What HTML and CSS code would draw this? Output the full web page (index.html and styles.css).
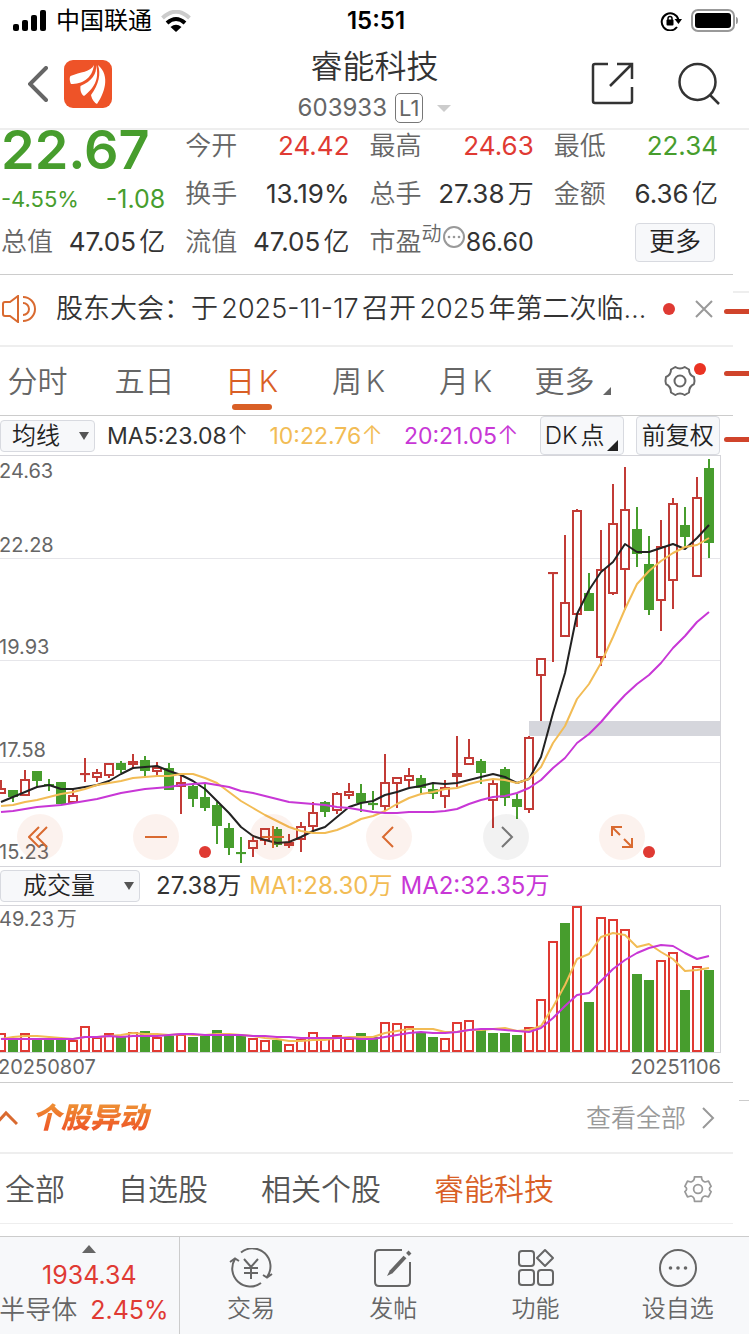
FILE: index.html
```html
<!DOCTYPE html>
<html lang="zh-CN">
<head>
    <meta charset="UTF-8">
    <meta name="viewport" content="width=device-width, initial-scale=1.0">
    <title>睿能科技 603933</title>
    <link rel="stylesheet" href="styles.css">
</head>
<body>
    <div class="status-bar">
        <div class="status-left">
            <svg width="34" height="22" viewBox="0 0 34 22">
                <rect x="0" y="14" width="6" height="7" rx="2"/>
                <rect x="9" y="10" width="6" height="11" rx="2"/>
                <rect x="18" y="5" width="6" height="16" rx="2"/>
                <rect x="27" y="0" width="6" height="21" rx="2"/>
            </svg>
            <span>中国联通</span>
            <svg width="30" height="22" viewBox="0 0 30 22">
                <path d="M1.500 8 Q15 -4.500 28.500 8" fill="none" stroke="#ccc" stroke-width="4"/>
                <path d="M6 13 Q15 5 24 13" fill="none" stroke="#000" stroke-width="4"/>
                <path d="M9.500 17 Q15 12.500 20.500 17 L15 22 Z"/>
            </svg>
        </div>
        <span class="time">15:51</span>
        <div class="status-right">
            <svg width="22" height="20" viewBox="0 0 22 20">
                <path d="M17 16 A8.500 8.500 0 1 1 18.500 9" fill="none" stroke="#000" stroke-width="2"/>
                <path d="M14.500 8 H22 L18.500 13 Z"/>
                <rect x="6.500" y="8.500" width="7" height="6" rx="1"/>
                <path d="M8 9 V7.500 A2 2 0 0 1 12 7.500 V9" fill="none" stroke="#000" stroke-width="1.500"/>
            </svg>
            <svg width="48" height="24" viewBox="0 0 48 24">
                <rect x="1" y="1" width="42" height="21" rx="6" fill="none" stroke="#999" stroke-width="2"/>
                <rect x="4" y="4" width="36" height="15" rx="3"/>
                <path d="M45 8 Q47 8 47 11.500 Q47 15 45 15 Z" fill="#999"/>
            </svg>
        </div>
    </div>

    <header class="header">
        <div class="header-side">
            <button class="icon-btn" aria-label="返回">
                <svg width="20" height="36" viewBox="0 0 20 36" fill="none" stroke="#666" stroke-width="4" stroke-linecap="round"><path d="M18 2 L2 18 L18 34"/></svg>
            </button>
            <a href="#" aria-label="首页">
                <svg width="48" height="48" viewBox="0 0 48 48">
                    <rect width="48" height="48" rx="9" fill="#ee5328"/>
                    <g fill="#fff">
                        <path d="M30 5 C27 12 16 12 6.500 16 C5 18 6 22 7 24 C18 24 28 19 30 5 Z"/>
                        <path d="M32 5 C33 14 28 21 16.500 26 C16 30 17 34 20 36 C29 29 36 20 32 5 Z"/>
                        <path d="M34 5 C37 14 35 24 27 35 C28 40 31 43 33 44 C40 34 47 16 34 5 Z"/>
                    </g>
                </svg>
            </a>
        </div>
        <div class="header-title">
            <h1>睿能科技</h1>
            <div class="code"><span>603933</span><span class="level">L1</span><i class="tri-down pale"></i></div>
        </div>
        <div class="header-side right">
            <button class="icon-btn" aria-label="分享">
                <svg width="44" height="44" viewBox="0 0 44 44" fill="none" stroke="#333" stroke-width="2.500"><path d="M17 2 H4 Q2 2 2 4 V39 Q2 41 4 41 H39 Q41 41 41 39 V25 M26 2 H41 V17 M41 2 L19 24"/></svg>
            </button>
            <button class="icon-btn" aria-label="搜索">
                <svg width="44" height="44" viewBox="0 0 44 44" fill="none" stroke="#333" stroke-width="2.500"><circle cx="20.500" cy="20" r="18"/><path d="M33 33 L42 42"/></svg>
            </button>
        </div>
    </header>

    <main class="main">
        <section class="quote">
            <div class="quote-grid">
                <div class="price green">22.67</div>
                <div class="cell"><span class="label">今开</span><span class="red">24.42</span></div>
                <div class="cell"><span class="label">最高</span><span class="red">24.63</span></div>
                <div class="cell"><span class="label">最低</span><span class="green">22.34</span></div>
                <div class="cell change green"><span class="percent">-4.55%</span><span>-1.08</span></div>
                <div class="cell"><span class="label">换手</span><span>13.19%</span></div>
                <div class="cell"><span class="label">总手</span><span>27.38<b>万</b></span></div>
                <div class="cell"><span class="label">金额</span><span>6.36<b>亿</b></span></div>
                <div class="cell"><span class="label">总值</span><span>47.05<b>亿</b></span></div>
                <div class="cell"><span class="label">流值</span><span>47.05<b>亿</b></span></div>
                <div class="cell">
                    <span class="label">市盈<sup>动</sup></span>
                    <svg class="info" width="22" height="22" viewBox="0 0 22 22" fill="#999"><circle cx="11" cy="11" r="10" fill="none" stroke="#999" stroke-width="2"/><circle cx="6" cy="11" r="1.300"/><circle cx="11" cy="11" r="1.300"/><circle cx="16" cy="11" r="1.300"/></svg>
                    <span class="ratio">86.60</span>
                </div>
                <div class="cell end"><button class="box-btn more-btn">更多</button></div>
            </div>
        </section>

        <section class="notice">
            <svg width="36" height="28" viewBox="0 0 36 28" fill="none" stroke="#d96a30" stroke-width="2"><path d="M5 7 H10 L18 1 V27 L10 21 H5 Q3 21 3 19 V9 Q3 7 5 7 Z M23 8 A6 6 0 0 1 23 20 M23 2 A12 12 0 0 1 23 26"/></svg>
            <a href="#" class="notice-text">股东大会：于2025-11-17召开2025年第二次临…</a>
            <i class="dot"></i>
            <button class="icon-btn" aria-label="关闭">
                <svg width="18" height="18" viewBox="0 0 18 18" fill="none" stroke="#999" stroke-width="2"><path d="M1 1 L17 17 M17 1 L1 17"/></svg>
            </button>
        </section>

        <nav class="tabs">
            <button>分时</button>
            <button>五日</button>
            <button class="active">日K</button>
            <button>周K</button>
            <button>月K</button>
            <button>更多<i class="corner"></i></button>
            <button class="gear-btn" aria-label="设置">
                <svg width="34" height="32" viewBox="0 0 34 32" fill="none" stroke="#666" stroke-width="2"><path d="M12.300 2 Q17 5 21.700 2 L26 4.500 Q26 10 31 12 Q32 16 31 19 Q26 21.500 26 27.500 L21.700 30 Q17 27 12.300 30 L8 27.500 Q8 21.500 3 19 Q2 16 3 12 Q8 10 8 4.500 Z" stroke-linejoin="round"/><circle cx="17" cy="16" r="5.500"/></svg>
                <i class="dot badge"></i>
            </button>
        </nav>

        <section class="indicator">
            <label class="select ma-select"><select aria-label="主图指标"><option>均线</option></select><i class="tri-down"></i></label>
            <span class="ma">MA5:23.08<i class="arrow">↑</i></span>
            <span class="ma yellow">10:22.76<i class="arrow">↑</i></span>
            <span class="ma purple">20:21.05<i class="arrow">↑</i></span>
            <button class="box-btn dk-btn">DK点<i class="corner dark"></i></button>
            <button class="box-btn">前复权</button>
        </section>

        <section class="plot">
            <svg id="kline" viewBox="0 0 720 410"></svg>
            <div class="controls">
                <button class="round" aria-label="最左"><svg width="24" height="24" viewBox="0 0 24 24"><path d="M11 2 L1 12 L11 22 M19 2 L9 12 L19 22"/></svg></button>
                <button class="round" aria-label="缩小"><svg width="24" height="24" viewBox="0 0 24 24"><path d="M1 12 H23"/></svg><i class="dot far"></i></button>
                <button class="round" aria-label="放大"><svg width="24" height="24" viewBox="0 0 24 24"><path d="M1 12 H23 M12 1 V23"/></svg></button>
                <button class="round" aria-label="左移"><svg width="24" height="24" viewBox="0 0 24 24"><path d="M16 2 L6 12 L16 22"/></svg></button>
                <button class="round gray" aria-label="右移"><svg width="24" height="24" viewBox="0 0 24 24"><path d="M8 2 L18 12 L8 22"/></svg></button>
                <button class="round" aria-label="全屏"><svg width="24" height="24" viewBox="0 0 24 24"><path d="M2 11 V2 H12 M2 2 L10 10 M22 13 V22 H12 M22 22 L14 14"/></svg><i class="dot near"></i></button>
            </div>
        </section>

        <section class="indicator volume-head">
            <label class="select vol-select"><select aria-label="副图指标"><option>成交量</option></select><i class="tri-down"></i></label>
            <span>27.38万</span>
            <span class="yellow">MA1:28.30万</span>
            <span class="purple">MA2:32.35万</span>
        </section>

        <section class="plot">
            <svg id="volume" viewBox="0 0 720 146"></svg>
        </section>
        <div class="dates"><span>20250807</span><span>20251106</span></div>

        <section class="moves-head">
            <svg width="18" height="16" viewBox="0 0 18 16" fill="none" stroke="#d96a30" stroke-width="3"><path d="M-4 14 L6 3 L17 14"/></svg>
            <h2>个股异动</h2>
            <a href="#">查看全部<svg width="14" height="24" viewBox="0 0 14 24" fill="none" stroke="#999" stroke-width="2"><path d="M2 2 L12 12 L2 22"/></svg></a>
        </section>

        <nav class="moves-tabs">
            <button>全部</button>
            <button>自选股</button>
            <button>相关个股</button>
            <button class="active">睿能科技</button>
            <button class="end" aria-label="设置">
                <svg width="30" height="28" viewBox="0 0 34 32" fill="none" stroke="#999" stroke-width="2"><path d="M13 2 H21 Q21 7 25 8 L29 7 L32 13 Q28 16 32 19 L29 25 L25 24 Q21 25 21 30 H13 Q13 25 9 24 L5 25 L2 19 Q6 16 2 13 L5 7 L9 8 Q13 7 13 2 Z" stroke-linejoin="round"/><circle cx="17" cy="16" r="5"/></svg>
            </button>
        </nav>

        <div class="marks">
            <i class="edge"></i>
            <i class="stroke first"></i>
            <i class="stroke second"></i>
            <i class="stroke third"></i>
            <i class="edge last"></i>
        </div>
    </main>

    <footer class="bottom-bar">
        <a href="#" class="sector">
            <i class="tri-up"></i>
            <span class="red">1934.34</span>
            <span class="sector-row"><span>半导体</span><span class="red">2.45%</span></span>
        </a>
        <nav class="actions">
            <a href="#">
                <svg width="44" height="40" viewBox="0 0 44 40" fill="none" stroke="#666" stroke-width="2"><path d="M12 4.500 A18 18 0 0 1 38 29 M34 27 L38 29.500 L43 26 M32 35 A18 18 0 0 1 6 11 M1 14 L6 10.500 L10 13 M15 11 L22 19 L29 11 M22 19 V31 M15 20 H29 M15 25 H29"/></svg>
                <span>交易</span>
            </a>
            <a href="#">
                <svg width="40" height="40" viewBox="0 0 40 40" fill="none" stroke="#666" stroke-width="2"><path d="M29 2 H6 Q2 2 2 6 V34 Q2 38 6 38 H33 Q37 38 37 34 V14"/><path d="M32 9 L18 24" stroke-width="4"/><path d="M14 28 L20 25 L17 22 Z" fill="#666" stroke="none"/><path d="M34.500 6.500 L37 4" stroke-width="4"/></svg>
                <span>发帖</span>
            </a>
            <a href="#">
                <svg width="40" height="40" viewBox="0 0 40 40" fill="none" stroke="#666" stroke-width="2"><rect x="3" y="3" width="15" height="15" rx="3"/><rect x="3" y="22" width="15" height="15" rx="3"/><rect x="22" y="22" width="15" height="15" rx="3"/><path d="M29 2 L37 10 L29 18 L21 10 Z" stroke-linejoin="round"/></svg>
                <span>功能</span>
            </a>
            <a href="#">
                <svg width="40" height="40" viewBox="0 0 40 40" fill="#666"><circle cx="20" cy="20" r="18" fill="none" stroke="#666" stroke-width="2"/><circle cx="12.500" cy="20" r="1.800"/><circle cx="20" cy="20" r="1.800"/><circle cx="27.500" cy="20" r="1.800"/></svg>
                <span>设自选</span>
            </a>
        </nav>
    </footer>
    <script src="chart.js"></script>
</body>
</html>
```

FILE: styles.css
```css
* {
    box-sizing: border-box;
}
body {
    margin: 0;
    min-height: 100vh;
    display: flex;
    flex-direction: column;
    background: #fff;
    color: #333;
    font-family: Inter, "Noto Sans CJK SC", sans-serif;
    font-size: 24px;
    font-weight: 400;
    line-height: 32px;
    overflow-x: hidden;
}
:lang(zh-CN) {
    text-autospace: normal;
}
svg {
    display: block;
    flex: none;
}
button, select {
    font: inherit;
    color: inherit;
    background: none;
    border: 0;
    padding: 0;
    margin: 0;
    white-space: nowrap;
}
a {
    color: inherit;
    text-decoration: none;
}
i {
    font-style: normal;
}
b {
    font-weight: 350;
}
h1, h2 {
    margin: 0;
}
.red { color: #e03a33; }
.green { color: #479d2d; }
.yellow { color: #f2bc55; }
.purple { color: #c837d6; }

.dot {
    width: 12px;
    height: 12px;
    border-radius: 50%;
    background: #df3a33;
    flex: none;
}
.tri-down {
    border: 5px solid transparent;
    border-top: 8px solid #555;
    border-bottom: 0;
}
.tri-down.pale {
    border-width: 7px 7px 0;
    border-top-color: #ccc;
}
.tri-up {
    border: 7px solid transparent;
    border-bottom: 8px solid #666;
    border-top: 0;
}
.corner {
    display: inline-block;
    border-left: 8px solid transparent;
    border-bottom: 8px solid #666;
}

/* status bar */
.status-bar {
    display: grid;
    grid-template-columns: 1fr auto 1fr;
    align-items: center;
    height: 42px;
    padding: 0 10px 1px 13px;
    color: #000;
}
.status-left, .status-right {
    display: flex;
    align-items: center;
    gap: 9px;
}
.status-right {
    justify-content: flex-end;
}
.time {
    font-size: 24px;
    font-weight: 600;
}

/* header */
.header {
    display: grid;
    grid-template-columns: 1fr auto 1fr;
    align-items: center;
    height: 88px;
    padding: 0 28px;
    border-bottom: 2px solid #eee;
}
.header-side {
    display: flex;
    align-items: center;
    gap: 16px;
    margin-bottom: 2px;
}
.header-side.right {
    justify-content: flex-end;
    gap: 42px;
}
.header-title {
    padding-top: 2px;
    text-align: center;
}
.header-title h1 {
    font-size: 32px;
    font-weight: 350;
    line-height: 44px;
}
.code {
    display: flex;
    align-items: center;
    justify-content: center;
    gap: 8px;
    height: 38px;
    color: #666;
}
.level {
    font-size: 22px;
    line-height: 28px;
    padding: 0 3px;
    border: 1px solid #777;
    border-radius: 5px;
}
.code .tri-down {
    margin-left: 6px;
}

/* quote */
.main {
    position: relative;
    flex: 1;
    padding-right: 16px;
}
.quote {
    overflow: hidden;
    height: 145px;
    border-bottom: 1px solid #ccc;
}
.quote-grid {
    display: grid;
    grid-template-columns: repeat(4, 1fr);
    grid-auto-rows: 48px;
    column-gap: 20px;
    margin-top: -8px;
    padding: 0 15px 0 1px;
    font-size: 26px;
}
.cell {
    display: flex;
    align-items: center;
    justify-content: space-between;
    white-space: nowrap;
}
.cell.end {
    justify-content: flex-end;
}
.cell.change {
    padding-top: 10px;
    font-size: 25px;
}
.label {
    font-weight: 350;
    color: #666;
}
.label sup {
    font-size: 20px;
    line-height: 0;
}
.info {
    margin-bottom: 10px;
}
.ratio {
    font-size: 25px;
}
.price {
    font-size: 54px;
    font-weight: 600;
    line-height: 56px;
}
.percent {
    font-size: 22px;
}
.box-btn {
    flex: none;
    height: 39px;
    padding: 0 5px;
    border: 1px solid #d8dae0;
    border-radius: 4px;
    background: #f7f8fa;
    color: #222;
    font-weight: 350;
}
.more-btn {
    padding: 0 13px;
    margin-right: 3px;
}

/* notice */
.notice {
    display: flex;
    align-items: center;
    height: 72px;
    padding: 0 20px 2px 0;
    border-bottom: 2px solid #eee;
}
.notice-text {
    flex: 1;
    margin-left: 20px;
    font-size: 27px;
    font-weight: 350;
    white-space: nowrap;
}
.notice .icon-btn {
    margin-left: 20px;
}

/* period tabs */
.tabs {
    display: flex;
    height: 69px;
    margin-left: -16px;
    border-bottom: 1px solid #ccc;
    color: #666;
    font-size: 30px;
    font-weight: 350;
}
.tabs button {
    position: relative;
    flex: 1 1 0;
    display: flex;
    align-items: center;
    justify-content: center;
}
.tabs .active {
    color: #d95f26;
}
.tabs .active::after {
    content: "";
    position: absolute;
    bottom: 5px;
    width: 40px;
    height: 6px;
    border-radius: 3px;
    background: #d95f26;
}
.tabs .corner {
    margin: 20px 0 0 8px;
}
.tabs .badge {
    position: absolute;
    top: 16px;
    left: calc(50% + 14px);
    background: #ea3323;
}

/* indicator rows */
.indicator {
    display: flex;
    align-items: center;
    height: 40px;
    margin-right: 12px;
    padding-right: 4px;
    border-bottom: 1px solid #d5d5da;
    white-space: nowrap;
}
.select {
    display: flex;
    flex: none;
    align-items: center;
    height: 32px;
    border: 1px solid #d8dae0;
    border-radius: 4px;
    background: #f7f8fa;
    color: #222;
    font-weight: 350;
}
.select select {
    appearance: none;
    flex: 1;
}
.ma-select {
    width: 95px;
    margin-right: 12px;
    padding: 0 5px 0 11px;
}
.vol-select {
    width: 140px;
    padding: 0 5px 0 22px;
}
.ma {
    margin-right: 21px;
    font-size: 23px;
}
.arrow {
    font-size: 26px;
    font-weight: 300;
    line-height: 0;
}
.dk-btn {
    position: relative;
    width: 84px;
    margin: 0 12px 0 auto;
    padding: 0 18px 0 4px;
}
.corner.dark {
    position: absolute;
    right: 5px;
    bottom: 3px;
    border-left-width: 11px;
    border-bottom: 11px solid #222;
}
.volume-head {
    gap: 8px;
    height: 39px;
}
.volume-head span {
    text-autospace: no-autospace;
}
.volume-head .select {
    margin-right: 8px;
}

/* charts */
.plot {
    position: relative;
    margin-right: 12px;
    border-right: 1px solid #d5d5da;
    border-bottom: 1px solid #d5d5da;
}
.plot > svg {
    width: 100%;
    height: auto;
}
.plot text {
    font-size: 20px;
    fill: #666;
}
.grid-line { stroke: #e6e6ea; }
.gap-band { fill: #d5d6dc; }
.up { fill: #fff; stroke: #c23b36; stroke-width: 2; }
.down { fill: #479d2d; stroke: #479d2d; stroke-width: 2; }
.vol.up { stroke: #e03a33; }
.line { fill: none; stroke-width: 2; stroke-linejoin: round; }
.line.short { stroke: #222; }
.line.mid { stroke: #f2bc55; }
.line.long { stroke: #c837d6; }
.controls {
    position: absolute;
    left: 17px;
    right: 75px;
    bottom: 6px;
    display: flex;
    justify-content: space-between;
}
.round {
    position: relative;
    display: grid;
    place-items: center;
    width: 46px;
    height: 46px;
    border-radius: 50%;
    background: rgba(217, 95, 38, 0.08);
}
.round svg {
    fill: none;
    stroke: #d96a30;
    stroke-width: 2;
}
.round.gray {
    background: rgba(0, 0, 0, 0.05);
}
.round.gray svg {
    stroke: #777;
}
.round .dot {
    position: absolute;
    top: 32px;
}
.dot.far {
    left: 66px;
}
.dot.near {
    left: 44px;
}
.dates {
    display: flex;
    justify-content: space-between;
    height: 30px;
    margin-left: -2px;
    padding-right: 12px;
    border-bottom: 1px solid #ccc;
    font-size: 20px;
    line-height: 28px;
    color: #666;
}

/* stock moves */
.moves-head {
    display: flex;
    align-items: center;
    height: 71px;
    padding-right: 18px;
    border-bottom: 2px solid #eee;
}
.moves-head h2 {
    margin-left: 14px;
    padding-right: 4px;
    font-size: 29px;
    font-weight: 900;
    font-style: italic;
    line-height: 40px;
    color: transparent;
    background: linear-gradient(#ee8c33 20%, #ee5a28 75%);
    background-clip: text;
}
.moves-head a {
    display: flex;
    align-items: center;
    gap: 15px;
    margin-left: auto;
    font-size: 25px;
    font-weight: 350;
    color: #999;
}
.moves-tabs {
    display: flex;
    align-items: center;
    gap: 53px;
    height: 70px;
    padding: 0 20px 0 5px;
    border-bottom: 1px solid #eee;
    color: #555;
    font-size: 30px;
    font-weight: 350;
}
.moves-tabs .active {
    color: #d95f26;
}
.moves-tabs .end {
    margin-left: auto;
}

/* right edge of the page below */
.marks i {
    position: absolute;
    right: 0;
}
.edge {
    top: 161px;
    width: 16px;
    height: 2px;
    background: #eee;
}
.edge.last {
    top: 970px;
    width: 10px;
    height: 1px;
    background: #ccc;
}
.stroke {
    width: 25px;
    height: 5px;
    border-radius: 3px 0 0 3px;
    background: #d0442b;
}
.first { top: 179px; }
.second { top: 241px; }
.third { top: 307px; }

/* bottom bar */
.bottom-bar {
    display: flex;
    height: 98px;
    border-top: 1px solid #ccc;
    background: #f7f8fa;
    color: #666;
    font-weight: 350;
}
.sector {
    display: flex;
    flex-direction: column;
    align-items: center;
    width: 24%;
    padding-top: 8px;
    border-right: 1px solid #ccc;
    font-size: 26px;
    white-space: nowrap;
}
.sector .red {
    font-size: 25px;
    font-weight: 400;
}
.sector > .red {
    margin-top: 6px;
}
.sector-row {
    display: flex;
    gap: 13px;
    margin: 3px 11px 0 0;
}
.actions {
    flex: 1;
    display: flex;
}
.actions a {
    flex: 1 1 0;
    display: flex;
    flex-direction: column;
    align-items: center;
    gap: 5px;
    padding-top: 11px;
}
```

FILE: chart.js
```javascript
const STEP = 12;

// [direction, high, body top, body bottom, low] in plot units
const candles = [
    ["up", 324, 332, 338, 338], ["down", 334, 334, 341, 346], ["up", 314, 323, 340, 340],
    ["down", 315, 315, 325, 332], ["down", 323, 328, 330, 335], ["down", 326, 326, 348, 348],
    ["up", 333, 339, 347, 347], ["up", 302, 317, 318, 326], ["up", 313, 316, 322, 326],
    ["up", 307, 307, 320, 322], ["down", 305, 307, 314, 317], ["up", 298, 305, 309, 312],
    ["down", 300, 304, 315, 321], ["up", 306, 311, 316, 321], ["down", 307, 312, 334, 334],
    ["up", 319, 326, 331, 358], ["down", 328, 330, 343, 351], ["down", 328, 341, 352, 355],
    ["down", 346, 349, 370, 388], ["down", 367, 372, 392, 399], ["down", 381, 396, 397, 407],
    ["up", 381, 384, 393, 401], ["up", 372, 372, 385, 389], ["down", 371, 373, 389, 391],
    ["up", 378, 386, 390, 392], ["up", 366, 370, 384, 396], ["up", 346, 356, 371, 375],
    ["down", 345, 346, 356, 361], ["up", 336, 337, 355, 358], ["up", 327, 335, 340, 343],
    ["down", 328, 337, 347, 356], ["down", 335, 347, 349, 354], ["up", 298, 326, 351, 355],
    ["up", 321, 321, 328, 352], ["up", 312, 319, 325, 331], ["down", 319, 322, 332, 338],
    ["down", 326, 333, 338, 343], ["up", 324, 331, 341, 352], ["up", 280, 317, 321, 331],
    ["up", 283, 301, 309, 309], ["down", 303, 305, 317, 328], ["up", 324, 327, 345, 372],
    ["down", 311, 313, 342, 350], ["down", 338, 343, 351, 363], ["up", 280, 281, 354, 357],
    ["up", 202, 202, 220, 265], ["up", 116, 116, 117, 206], ["up", 79, 146, 181, 181],
    ["up", 53, 54, 159, 171], ["down", 117, 137, 155, 155], ["up", 74, 113, 202, 210],
    ["up", 28, 67, 138, 139], ["up", 11, 53, 114, 154], ["down", 51, 73, 98, 111],
    ["down", 80, 108, 154, 159], ["up", 64, 90, 145, 175], ["up", 42, 47, 125, 153],
    ["down", 51, 69, 81, 92], ["up", 21, 41, 121, 121], ["down", 3, 12, 87, 102]
];

const ma5 = [346, 341, 336, 331, 329, 333, 333, 331, 329, 325, 318, 312, 311, 310, 315, 319, 325, 333, 345, 357,
    371, 380, 384, 387, 386, 381, 375, 371, 361, 351, 347, 345, 339, 336, 332, 330, 327, 328, 327, 324,
    321, 318, 321, 327, 323, 301, 257, 217, 158, 134, 116, 106, 88, 96, 96, 92, 88, 93, 82, 69];
const ma10 = [350, 349, 346, 344, 341, 338, 336, 333, 329, 327, 325, 322, 321, 320, 320, 318, 318, 322, 327, 336,
    345, 352, 359, 365, 371, 375, 377, 377, 374, 369, 363, 360, 355, 348, 342, 338, 336, 333, 332, 328,
    325, 323, 324, 327, 323, 311, 287, 270, 243, 228, 207, 181, 153, 128, 115, 105, 97, 91, 89, 82];
const ma20 = [356, 355, 353, 351, 350, 349, 347, 345, 343, 340, 337, 335, 333, 332, 331, 329, 328, 327, 329, 331,
    335, 337, 340, 343, 346, 347, 348, 349, 351, 352, 354, 356, 357, 357, 356, 356, 356, 355, 353, 348,
    344, 341, 340, 337, 332, 324, 312, 302, 287, 278, 266, 252, 239, 228, 219, 207, 192, 180, 166, 156];

// bar tops, direction string below: r = up, g = down
const volumes = [127, 133, 127, 133, 133, 133, 134, 120, 131, 127, 131, 126, 125, 131, 130, 128, 131, 128, 124, 128,
    130, 132, 134, 134, 138, 133, 126, 132, 129, 132, 127, 131, 116, 117, 120, 126, 131, 132, 116, 114,
    124, 127, 127, 129, 121, 93, 35, 17, 0, 96, 11, 13, 23, 68, 74, 54, 46, 84, 60, 64];
const volumeDirs = "rgrgggrrrrgrgrgrgggggrrgrrrrrrggrrrggrrrggggrrrgrgrrrggrrgrg";
const volMa1 = [133, 131, 130, 130, 131, 132, 133, 131, 131, 130, 129, 127, 128, 128, 129, 128, 129, 129, 128, 128,
    129, 130, 132, 133, 135, 135, 134, 134, 132, 131, 131, 131, 127, 125, 123, 123, 123, 126, 126, 124,
    124, 123, 122, 125, 124, 120, 101, 79, 53, 48, 31, 27, 29, 41, 38, 46, 53, 65, 64, 62];
const volMa2 = [133, 133, 133, 133, 133, 133, 133, 131, 131, 130, 131, 130, 130, 130, 129, 128, 128, 129, 129, 129,
    129, 130, 130, 131, 131, 132, 132, 132, 132, 132, 133, 133, 131, 129, 127, 126, 127, 127, 126, 124,
    123, 123, 124, 125, 126, 122, 112, 100, 89, 87, 75, 63, 54, 47, 42, 39, 40, 47, 53, 50];

function add(svg, tag, attrs, text) {
    const el = document.createElementNS("http://www.w3.org/2000/svg", tag);
    for (const key in attrs) {
        el.setAttribute(key, attrs[key]);
    }
    if (text) {
        el.textContent = text;
    }
    svg.appendChild(el);
}

function addLine(svg, values, name) {
    const points = values.map((y, i) => (1 + i * STEP) + "," + y).join(" ");
    add(svg, "polyline", { points: points, class: "line " + name });
}

function drawKline() {
    const svg = document.getElementById("kline");
    [102, 204, 306].forEach(y => {
        add(svg, "path", { d: "M0 " + (y + 0.5) + " H720", class: "grid-line" });
    });
    add(svg, "rect", { x: 529, y: 265, width: 191, height: 15, class: "gap-band" });
    candles.forEach(([dir, high, top, bottom, low], i) => {
        const x = 1 + i * STEP;
        add(svg, "path", { d: "M" + x + " " + high + " V" + low, class: dir });
        add(svg, "rect", { x: x - 4, y: top + 1, width: 8, height: Math.max(bottom - top - 2, 0.1), class: dir });
    });
    addLine(svg, ma5, "short");
    addLine(svg, ma10, "mid");
    addLine(svg, ma20, "long");
    [["24.63", 22], ["22.28", 96], ["19.93", 198], ["17.58", 301], ["15.23", 403]].forEach(([label, y]) => {
        add(svg, "text", { x: -1, y: y }, label);
    });
}

function drawVolume() {
    const svg = document.getElementById("volume");
    volumes.forEach((top, i) => {
        const dir = volumeDirs[i] === "r" ? "up" : "down";
        add(svg, "rect", { x: i * STEP - 3, y: top + 1, width: 8, height: 144 - top, class: "vol " + dir });
    });
    addLine(svg, volMa1, "mid");
    addLine(svg, volMa2, "long");
    add(svg, "text", { x: -1, y: 20 }, "49.23万");
}

drawKline();
drawVolume();
```
